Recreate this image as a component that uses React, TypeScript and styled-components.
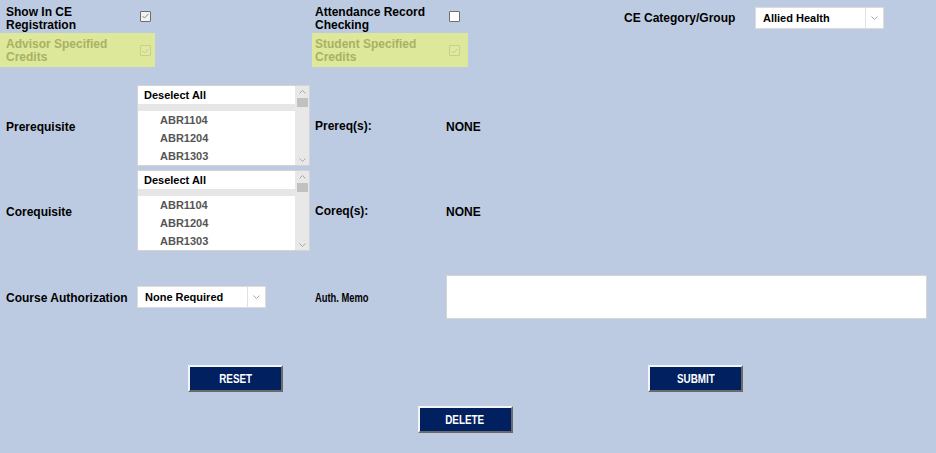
import React from 'react';
import styled, { createGlobalStyle } from 'styled-components';

const GlobalStyle = createGlobalStyle`
  html, body {
    margin: 0;
    padding: 0;
    background: #bdcbe2;
  }
  body {
    font-family: "Liberation Sans", Arial, sans-serif;
    font-size: 12px;
    color: #000;
  }
`;

const Page = styled.div`
  width: 936px;
  height: 453px;
  background: #bdcbe2;
  overflow: hidden;
`;

const TopBar = styled.div`
  display: flex;
  padding-top: 5px;
`;

const CheckColumn = styled.div`
  width: 312px;
  display: flex;
  flex-direction: column;
`;

const CheckRow = styled.div<{ $indent: number; $highlight?: boolean; $width: number }>`
  display: flex;
  align-items: center;
  width: ${p => p.$width}px;
  box-sizing: border-box;
  padding-left: ${p => p.$indent}px;
  padding-top: ${p => (p.$highlight ? 1 : 0)}px;
  height: ${p => (p.$highlight ? 34 : 27)}px;
  margin-top: ${p => (p.$highlight ? 1 : 0)}px;
  background: ${p => (p.$highlight ? '#dde89b' : 'transparent')};
`;

const CheckLabel = styled.span<{ $disabled?: boolean }>`
  width: 134px;
  font-weight: bold;
  font-size: 12px;
  line-height: 13px;
  color: ${p => (p.$disabled ? '#a9b165' : '#000')};
`;

const Box = styled.span<{ $disabled?: boolean; $checked?: boolean }>`
  display: inline-flex;
  align-items: center;
  justify-content: center;
  width: 11px;
  height: 11px;
  box-sizing: border-box;
  border: 1px solid ${p => (p.$disabled ? '#c9d084' : '#6e6e6e')};
  border-radius: 1px;
  background: ${p => (p.$disabled ? '#e0e8a6' : p.$checked ? '#f2f2f2' : '#fff')};
  margin-top: ${p => (p.$disabled ? 0 : -5)}px;
`;

const CategoryRow = styled.div`
  display: flex;
  align-items: center;
  height: 22px;
  margin-top: 2px;
`;

const Label = styled.span<{ $width?: number }>`
  font-weight: bold;
  font-size: 12px;
  width: ${p => (p.$width ? `${p.$width}px` : 'auto')};
`;

const Narrow = styled.span`
  display: inline-block;
  font-size: 13px;
  transform: scaleX(0.72);
  transform-origin: left center;
  white-space: nowrap;
`;

const SelectBox = styled.div<{ $width: number }>`
  display: flex;
  width: ${p => p.$width}px;
  height: 22px;
  box-sizing: border-box;
  border: 1px solid #dcdcdc;
  background: #fff;
`;

const SelectText = styled.span`
  flex: 1;
  padding-left: 7px;
  font-size: 11px;
  font-weight: bold;
  line-height: 20px;
  white-space: nowrap;
`;

const SelectArrow = styled.span`
  width: 17px;
  border-left: 1px solid #e2e2e2;
  display: flex;
  align-items: center;
  justify-content: center;
`;

const FormGrid = styled.div`
  display: grid;
  grid-template-columns: 137px 178px 131px 1fr;
  row-gap: 4px;
  align-items: center;
  margin-top: 18px;
`;

const RowLabel = styled.span`
  padding-left: 6px;
  padding-top: 2px;
  font-weight: bold;
  font-size: 12px;
`;

const Value = styled.span`
  font-weight: bold;
  font-size: 12px;
  padding-top: 2px;
`;

const ListBox = styled.div`
  display: flex;
  width: 173px;
  height: 81px;
  box-sizing: border-box;
  border: 1px solid #d4d4d4;
  background: #fff;
  overflow: hidden;
`;

const Options = styled.div`
  flex: 1;
  display: flex;
  flex-direction: column;
`;

const OptionHead = styled.div`
  height: 18px;
  line-height: 18px;
  padding-left: 6px;
  font-size: 11px;
  font-weight: bold;
`;

const OptionGap = styled.div`
  height: 7px;
  background: #e6e6e6;
`;

const Option = styled.div`
  height: 18px;
  line-height: 18px;
  padding-left: 22px;
  font-size: 11px;
  font-weight: bold;
  color: #555;
`;

const ScrollTrack = styled.div`
  width: 14px;
  background: #e8e8e8;
  display: flex;
  flex-direction: column;
  align-items: center;
`;

const ScrollButton = styled.div`
  height: 11px;
  width: 14px;
  display: flex;
  align-items: center;
  justify-content: center;
`;

const ScrollThumb = styled.div`
  width: 11px;
  height: 9px;
  background: #c1c1c1;
  margin-top: 1px;
`;

const ScrollSpace = styled.div`
  flex: 1;
`;

const AuthRow = styled.div`
  display: grid;
  grid-template-columns: 137px 178px 131px 481px;
  align-items: center;
  margin-top: 24px;
`;

const Memo = styled.div`
  height: 44px;
  box-sizing: border-box;
  border: 1px solid #d6d6d6;
  background: #fff;
`;

const ButtonRow = styled.div<{ $top: number }>`
  display: flex;
  justify-content: space-between;
  padding: 0 193px 0 188px;
  margin-top: ${p => p.$top}px;
`;

const CenterRow = styled.div`
  display: flex;
  justify-content: center;
  padding-right: 6px;
  margin-top: 14px;
`;

const Button = styled.button`
  width: 95px;
  height: 27px;
  background: #002060;
  color: #fff;
  font-family: "Liberation Sans", Arial, sans-serif;
  font-weight: bold;
  font-size: 13px;
  border: 2px solid;
  border-color: #f4f4f4 #6a6a6a #6a6a6a #f4f4f4;
  padding: 0;
  cursor: pointer;
`;

const ButtonText = styled.span`
  display: inline-block;
  transform: scaleX(0.76);
`;

const Chevron = ({ up }: { up?: boolean }) => (
  <svg width="7" height="4" viewBox="0 0 7 4">
    <path d={up ? 'M0.5 3.5 L3.5 0.5 L6.5 3.5' : 'M0.5 0.5 L3.5 3.5 L6.5 0.5'} fill="none" stroke="#a8a8a8" strokeWidth="1" />
  </svg>
);

const Check = ({ disabled, checked }: { disabled?: boolean; checked?: boolean }) => (
  <Box $disabled={disabled} $checked={checked}>
    {checked && (
      <svg width="7" height="6" viewBox="0 0 7 6">
        <path d="M0.5 3 L2.5 5 L6.5 0.8" fill="none" stroke={disabled ? '#c4cb7c' : '#8a8a8a'} strokeWidth="1" />
      </svg>
    )}
  </Box>
);

const Select: React.FC<{ value: string; width: number }> = ({ value, width }) => (
  <SelectBox $width={width}>
    <SelectText>{value}</SelectText>
    <SelectArrow>
      <Chevron />
    </SelectArrow>
  </SelectBox>
);

const CourseList: React.FC<{ items: string[] }> = ({ items }) => (
  <ListBox>
    <Options>
      <OptionHead>Deselect All</OptionHead>
      <OptionGap />
      {items.map(item => (
        <Option key={item}>{item}</Option>
      ))}
    </Options>
    <ScrollTrack>
      <ScrollButton>
        <Chevron up />
      </ScrollButton>
      <ScrollThumb />
      <ScrollSpace />
      <ScrollButton>
        <Chevron />
      </ScrollButton>
    </ScrollTrack>
  </ListBox>
);

const courses = ['ABR1104', 'ABR1204', 'ABR1303'];

const App: React.FC = () => {
  return (
    <Page>
      <GlobalStyle />
      <TopBar>
        <CheckColumn>
          <CheckRow $indent={6} $width={155}>
            <CheckLabel>Show In CE<br />Registration</CheckLabel>
            <Check checked />
          </CheckRow>
          <CheckRow $indent={6} $width={155} $highlight>
            <CheckLabel $disabled>Advisor Specified<br />Credits</CheckLabel>
            <Check checked disabled />
          </CheckRow>
        </CheckColumn>
        <CheckColumn>
          <CheckRow $indent={3} $width={156}>
            <CheckLabel>Attendance Record<br />Checking</CheckLabel>
            <Check />
          </CheckRow>
          <CheckRow $indent={3} $width={156} $highlight>
            <CheckLabel $disabled>Student Specified<br />Credits</CheckLabel>
            <Check checked disabled />
          </CheckRow>
        </CheckColumn>
        <CategoryRow>
          <Label $width={131}>CE Category/Group</Label>
          <Select value="Allied Health" width={129} />
        </CategoryRow>
      </TopBar>

      <FormGrid>
        <RowLabel>Prerequisite</RowLabel>
        <CourseList items={courses} />
        <Label>Prereq(s):</Label>
        <Value>NONE</Value>

        <RowLabel>Corequisite</RowLabel>
        <CourseList items={courses} />
        <Label>Coreq(s):</Label>
        <Value>NONE</Value>
      </FormGrid>

      <AuthRow>
        <RowLabel>Course Authorization</RowLabel>
        <Select value="None Required" width={129} />
        <Label>
          <Narrow>Auth. Memo</Narrow>
        </Label>
        <Memo />
      </AuthRow>

      <ButtonRow $top={46}>
        <Button><ButtonText>RESET</ButtonText></Button>
        <Button><ButtonText>SUBMIT</ButtonText></Button>
      </ButtonRow>
      <CenterRow>
        <Button><ButtonText>DELETE</ButtonText></Button>
      </CenterRow>
    </Page>
  );
};

export default App;
